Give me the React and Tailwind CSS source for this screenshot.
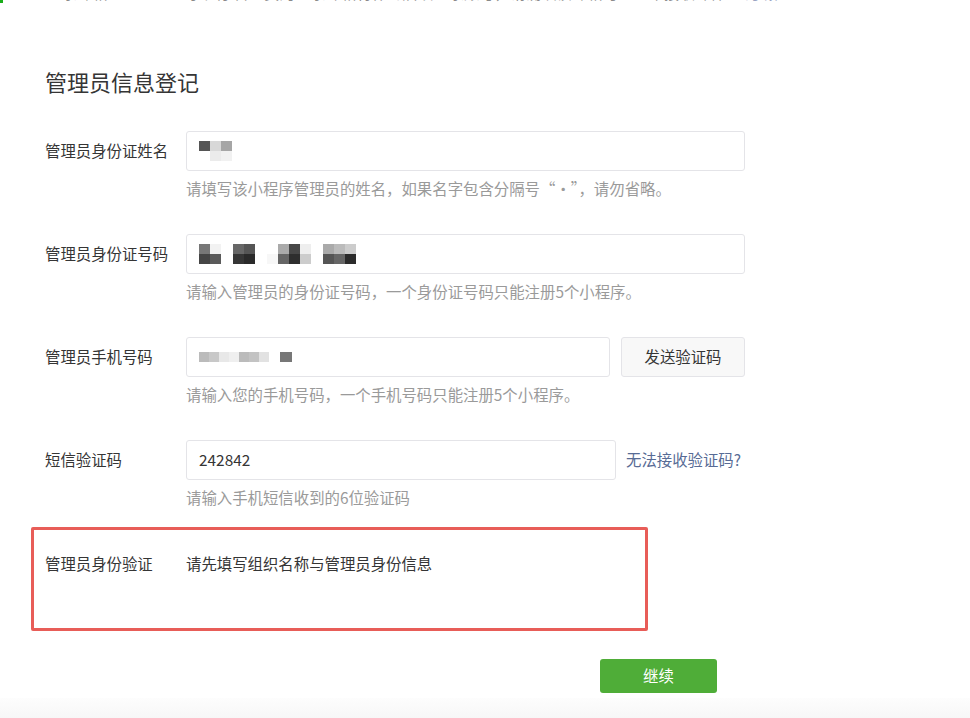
import React from "react";

const font = { fontFamily: '"Noto Sans CJK SC", "Noto Sans", sans-serif' };

// 打码块（模糊的个人信息）
const Mosaic = ({ rows }) => (
  <div className="flex flex-col">
    {rows.map((row, i) => (
      <div key={i} className="flex">
        {row.map((c, j) => (
          <span
            key={j}
            className="block w-[11px] h-[10px]"
            style={{ backgroundColor: c }}
          />
        ))}
      </div>
    ))}
  </div>
);

const Row = ({ label, children, hint, height = "h-[103px]" }) => (
  <div className={`flex ${height}`}>
    <div className="w-[141px] h-[40px] flex items-center text-[15.4px] text-[#353535]">
      {label}
    </div>
    <div className="flex flex-col">
      {children}
      <div className="mt-[6px] leading-[22px] text-[15.4px] text-[#9a9a9a]">{hint}</div>
    </div>
  </div>
);

const Input = ({ width, children }) => (
  <div
    className={`${width} h-[40px] border border-[#e4e4e8] rounded-[3px] bg-white flex items-center pl-[12px] text-[15.4px] text-[#353535]`}
  >
    {children}
  </div>
);

export default function App() {
  return (
    <div className="relative w-[970px] h-[718px] bg-white overflow-hidden" style={font}>
      {/* 顶部被截断的一行 */}
      <div className="h-[3px] overflow-hidden flex items-start">
        <div className="w-[3px] h-[3px] bg-[#1aad19] shrink-0" />
        <div className="flex -mt-[19px] text-[15.4px] leading-[22px] whitespace-nowrap">
          <span className="ml-[43px] w-[141px] text-[#8a8a8a]">登录邮箱</span>
          <span className="text-[#8a8a8a]">
            小程序管理员的登录邮箱将作为后续登录账号，请确认该邮箱可以正常接收邮件
          </span>
          <span className="ml-[8px] text-[#9aa5c4]">去了解</span>
        </div>
      </div>

      <div className="pl-[45px]">
        <h2 className="mt-[62px] text-[22px] leading-[32px] font-normal text-[#353535]">
          管理员信息登记
        </h2>

        <div className="mt-[34px]">
          <Row
            label="管理员身份证姓名"
            hint="请填写该小程序管理员的姓名，如果名字包含分隔号“·”，请勿省略。"
          >
            <Input width="w-[559px]">
              <Mosaic
                rows={[
                  ["#555555", "#d8d8d8", "#a6a6a6"],
                  ["#ffffff", "#ebebeb", "#f1f1f1"],
                ]}
              />
            </Input>
          </Row>

          <Row
            label="管理员身份证号码"
            hint="请输入管理员的身份证号码，一个身份证号码只能注册5个小程序。"
          >
            <Input width="w-[559px]">
              <div className="flex gap-[12px]">
                <Mosaic rows={[["#777777", "#f2f2f2"], ["#454545", "#5a5a5a"]]} />
                <Mosaic rows={[["#676767", "#555555"], ["#363636", "#2a2a2a"]]} />
                <Mosaic
                  rows={[
                    ["#ffffff", "#aaaaaa", "#474747", "#eeeeee"],
                    ["#f7f7f7", "#666666", "#2e2e2e", "#cccccc"],
                  ]}
                />
                <Mosaic
                  rows={[
                    ["#aaaaaa", "#bbbbbb", "#cccccc"],
                    ["#555555", "#666666", "#2b2b2b"],
                  ]}
                />
              </div>
            </Input>
          </Row>

          <Row
            label="管理员手机号码"
            hint="请输入您的手机号码，一个手机号码只能注册5个小程序。"
          >
            <div className="flex gap-[11px]">
              <Input width="w-[424px]">
                <div className="flex items-center">
                  {["#bbbbbb", "#c8c8c8", "#e8e8e8", "#efefef", "#bbbbbb", "#c3c3c3", "#e2e2e2"].map(
                    (c, i) => (
                      <span key={i} className="block w-[10px] h-[10px]" style={{ backgroundColor: c }} />
                    )
                  )}
                  <span className="block ml-[11px] w-[12px] h-[10px] bg-[#777777]" />
                </div>
              </Input>
              <button className="w-[124px] h-[40px] border border-[#e4e4e8] rounded-[3px] bg-[#f8f8f8] text-[15.4px] text-[#353535]">
                发送验证码
              </button>
            </div>
          </Row>

          <Row label="短信验证码" hint="请输入手机短信收到的6位验证码" height="h-[87px]">
            <div className="flex items-center gap-[10px]">
              <Input width="w-[430px]">242842</Input>
              <span className="text-[15.4px] text-[#576b95]">无法接收验证码?</span>
            </div>
          </Row>
        </div>

        {/* 红框标注 */}
        <div className="-ml-[14px] w-[617px] h-[104px] border-[3px] border-[#e85d58] rounded-[2px] pl-[11px] pt-[22px]">
          <div className="flex text-[15.4px] leading-[22px] text-[#353535]">
            <span className="w-[141px]">管理员身份验证</span>
            <span>请先填写组织名称与管理员身份信息</span>
          </div>
        </div>

        <div className="mt-[28px] pl-[555px]">
          <button className="w-[117px] h-[34px] rounded-[3px] bg-[#4fad38] text-white text-[15.4px]">
            继续
          </button>
        </div>
      </div>

      <div className="absolute left-0 right-0 bottom-0 h-[20px] bg-gradient-to-b from-[#fdfdfd] to-[#f7f7f7]" />
    </div>
  );
}
